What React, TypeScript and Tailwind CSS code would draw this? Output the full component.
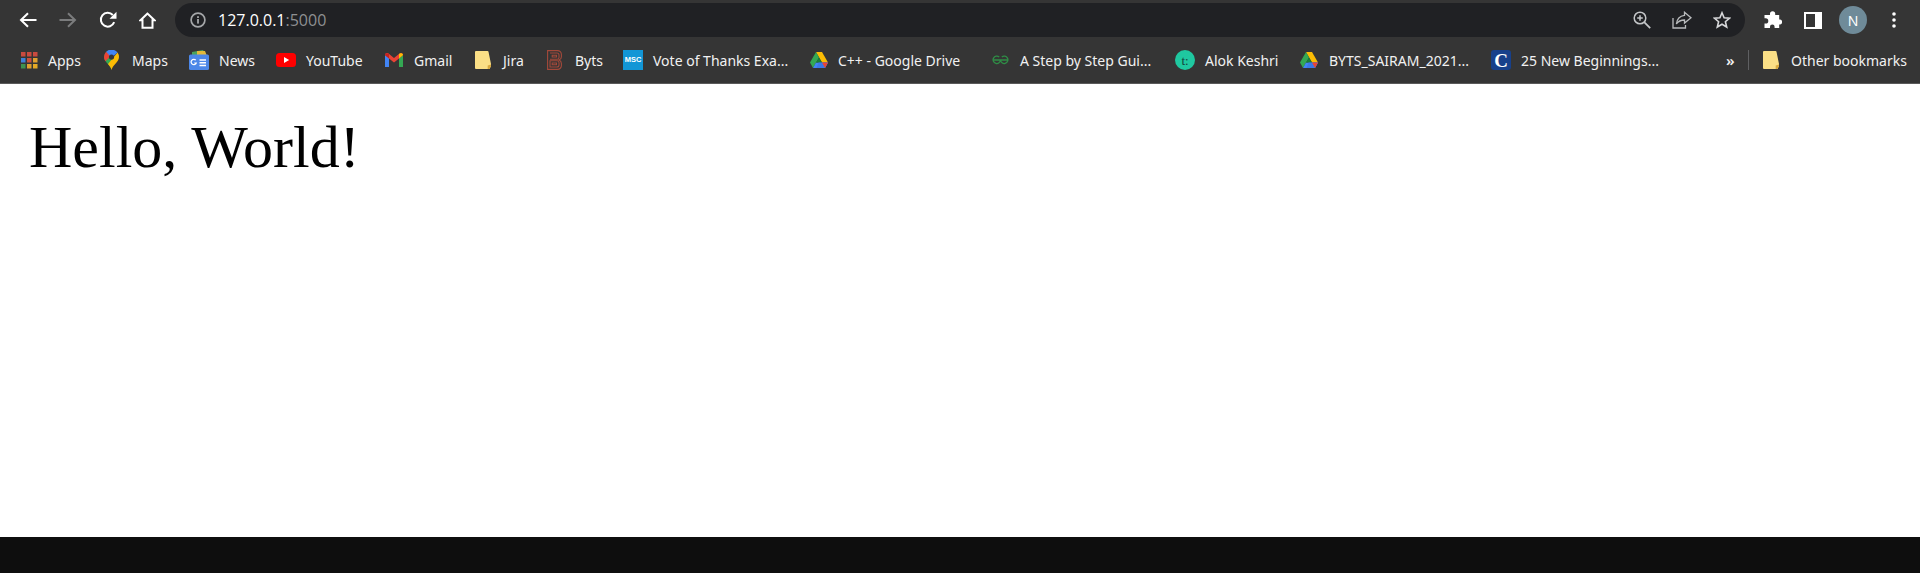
import React from "react";

const Sans = "font-['Noto_Sans','Open_Sans',sans-serif]";

function Back({ color }: { color: string }) {
  return (
    <svg width="18" height="16" viewBox="0 0 18 16" fill="none" stroke={color} strokeWidth="2">
      <path d="M17.500 8H2.500M9 1.200 2 8l7 6.800" />
    </svg>
  );
}
function Forward() {
  return (
    <svg width="18" height="16" viewBox="0 0 18 16" fill="none" stroke="#7b7c7d" strokeWidth="2">
      <path d="M.5 8h15M9 1.200 16 8l-7 6.800" />
    </svg>
  );
}
function Reload() {
  return (
    <svg width="18" height="18" viewBox="0 0 18 18" fill="none">
      <path d="M15.200 11.200A6.900 6.900 0 1 1 13.800 4" stroke="#fff" strokeWidth="2" />
      <path d="M17.500.8v7h-7z" fill="#fff" />
    </svg>
  );
}
function Home() {
  return (
    <svg width="17" height="17" viewBox="0 0 17 17" fill="none" stroke="#fff" strokeWidth="2">
      <path d="M8.500 1.600 1.500 8.200h2v7.600h10V8.200h2z" strokeLinejoin="miter" />
    </svg>
  );
}
function Info() {
  return (
    <svg width="16" height="16" viewBox="0 0 16 16" fill="none">
      <circle cx="8" cy="8" r="6.900" stroke="#a5a7a9" strokeWidth="1.700" />
      <rect x="7.100" y="7" width="1.800" height="4.600" fill="#a5a7a9" />
      <rect x="7.100" y="4.200" width="1.800" height="1.800" fill="#a5a7a9" />
    </svg>
  );
}
function ZoomIcon() {
  return (
    <svg width="18" height="18" viewBox="0 0 18 18" fill="none" stroke="#c4c6c8" strokeWidth="1.500">
      <circle cx="7" cy="7" r="5.800" />
      <path d="m11.200 11.200 6 6" strokeWidth="1.800" />
      <path d="M7 4.200v5.600M4.200 7h5.600" />
    </svg>
  );
}
function Share() {
  return (
    <svg width="20" height="18" viewBox="0 0 20 18" fill="none" stroke="#b9bbbd" strokeWidth="1.300">
      <path d="M1 7v10h12.500v-3" />
      <path d="M12.500 1.200 19 6.700l-6.500 5.400V9C9 9 6.400 10 4.400 13c.5-4.600 3.300-8 8.100-8.600z" />
    </svg>
  );
}
function Star() {
  return (
    <svg width="18" height="18" viewBox="0 0 18 18" fill="none" stroke="#d7d8da" strokeWidth="1.600">
      <path d="m9 1.800 2.100 5 5.400.4-4.100 3.500 1.300 5.300L9 13.200 4.300 16l1.300-5.300-4.100-3.500 5.400-.4z" />
    </svg>
  );
}
function Puzzle() {
  return (
    <svg width="19" height="18" viewBox="0 0 19 18" fill="#fff">
      <path d="M3 4h4V2.800a2.600 2.600 0 0 1 5.200 0V4h4v4.400h1a2.700 2.700 0 0 1 0 5.200h-1V17h-4.600v-1.300a2.300 2.300 0 0 0-4.600 0V17H1.500v-4.500h1.200a2.600 2.600 0 0 0 0-5.200H1.500V4z" />
    </svg>
  );
}
function Panel() {
  return (
    <svg width="18" height="17" viewBox="0 0 18 17">
      <path d="M0 0h18v17H0z" fill="#fff" />
      <path d="M2 2h9v13H2z" fill="#353535" />
    </svg>
  );
}
function Dots() {
  return (
    <svg width="6" height="16" viewBox="0 0 6 16" fill="#fff">
      <circle cx="3" cy="2" r="1.800" />
      <circle cx="3" cy="8" r="1.800" />
      <circle cx="3" cy="14" r="1.800" />
    </svg>
  );
}
function AppsIcon() {
  const colors = ["#c94a3f", "#c94a3f", "#c94a3f", "#3f80d8", "#c9503f", "#e0a030", "#3d9150", "#e0a030", "#e6a925"];
  return (
    <svg width="18" height="18" viewBox="0 0 18 18">
      {colors.map((c, i) => (
        <rect key={i} x={1 + (i % 3) * 6} y={1 + Math.floor(i / 3) * 6} width="4.500" height="4.500" fill={c} />
      ))}
    </svg>
  );
}
function MapsIcon() {
  return (
    <svg width="15" height="20" viewBox="0 0 15 20">
      <path d="M7.500 20C6.500 15 0 12 0 7a7.500 7.500 0 0 1 7.500-7z" fill="#34a853" />
      <path d="M7.500 20c1-5 7.500-8 7.500-13a7.500 7.500 0 0 0-1.500-4.500L4 14c1.500 2 3 3.500 3.500 6z" fill="#fbbc04" />
      <path d="M2.200 1.800A7.500 7.500 0 0 0 0 7c0 1.500.6 3 1.500 4.300L7.500 5z" fill="#ea4335" />
      <path d="M2.200 1.800A7.500 7.500 0 0 1 13.500 2.500L7.500 8z" fill="#4285f4" />
      <circle cx="7.500" cy="7" r="2.600" fill="#35363a" />
    </svg>
  );
}
function NewsIcon() {
  return (
    <svg width="20" height="20" viewBox="0 0 20 20">
      <path d="M3 2 14 0l3 5H3z" fill="#4aa35c" />
      <path d="M8 1h8l2 5H8z" fill="#e2b93b" />
      <rect x="0" y="4.500" width="20" height="15.500" rx="1.500" fill="#4c87e8" />
      <path d="M6.800 10.200a2.700 2.700 0 1 0 .5 2.800H5.300" fill="none" stroke="#fff" strokeWidth="1.200" />
      <path d="M10.500 9.200h6.500v1.500h-6.500zM10.500 12h6.500v1.500h-6.500zM10.500 14.800h6.500v1.500h-6.500z" fill="#fff" />
    </svg>
  );
}
function YouTubeIcon() {
  return (
    <svg width="20" height="14" viewBox="0 0 20 14">
      <rect width="20" height="14" rx="3.500" fill="#f00" />
      <path d="m8 4 5.200 3L8 10z" fill="#fff" />
    </svg>
  );
}
function GmailIcon() {
  return (
    <svg width="18" height="14" viewBox="0 0 18 14">
      <path d="M0 2v12h4V5z" fill="#4285f4" />
      <path d="M14 5v9h4V2z" fill="#34a853" />
      <path d="M0 2c0-2 2.500-2.500 3.500-1.500L9 5l5.500-4.500C15.500-.5 18 0 18 2l-4 3.500L9 9.500 4 5.500z" fill="#ea4335" />
      <path d="M14 .9c1.500-1.400 4-.8 4 1.100l-4 3.500z" fill="#fbbc04" />
      <path d="M0 2c0-1.900 2.500-2.500 4-1.100v4.600z" fill="#c5221f" />
    </svg>
  );
}
function NoteIcon() {
  return (
    <svg width="16" height="18" viewBox="0 0 16 18">
      <path d="M1 0h11.500a1 1 0 0 1 1 .8L16 13v2l-1.500 3H1a1 1 0 0 1-1-1V1a1 1 0 0 1 1-1z" fill="#fbdf86" />
      <path d="M16 13.500v1.500l-1.500 3h-1.800v-3.500z" fill="#d9a93f" />
    </svg>
  );
}
function BytsIcon() {
  return (
    <svg width="15" height="20" viewBox="0 0 15 20" fill="none" stroke="#a4493a" strokeWidth="1.100">
      <path d="M.6.6h10a3.800 3.800 0 0 1 3.800 3.800v2A3.600 3.600 0 0 1 12 10a3.800 3.800 0 0 1 2.400 3.500v2a3.800 3.800 0 0 1-3.800 3.900H.6z" />
      <path d="M3 3h7a2 2 0 0 1 2 2v2.500a1.800 1.800 0 0 1-1.800 1.700H3M3 10.800h7.200a1.800 1.800 0 0 1 1.800 1.700V15a2 2 0 0 1-2 2H3z" />
      <path d="M5.200 5.200h4.300v1.800H5.200zM5.200 13h4.300v1.800H5.200z" />
    </svg>
  );
}
function MscIcon() {
  return (
    <span className="flex h-5 w-5 items-center justify-center bg-[#1296d6] font-['Liberation_Sans',sans-serif] text-[7.5px] font-bold text-white">
      MSC
    </span>
  );
}
function DriveIcon() {
  return (
    <svg width="18" height="16" viewBox="0 0 18 16">
      <path d="M6 0h6l6 10.500h-6z" fill="#fbbc04" />
      <path d="M6 0 0 10.500 3 16l6-10.500z" fill="#34a853" />
      <path d="M6 10.500h12L15 16H3z" fill="#4285f4" />
      <path d="M9 5.500 6 10.500h6z" fill="#188038" />
      <path d="M15 16H6.500l2-5.500H18z" fill="#3b78e7" />
      <path d="M12 10.500h6L15 16z" fill="#ea4335" />
    </svg>
  );
}
function GeeksIcon() {
  return (
    <svg width="17" height="10" viewBox="0 0 17 10" fill="none" stroke="#2f8d46" strokeWidth="1.300">
      <path d="M8.500 5a3.700 3.700 0 1 1-1.300-3M8.500 5a3.700 3.700 0 1 0 1.300-3M.8 5h15.400" />
    </svg>
  );
}
function TIcon() {
  return (
    <span className="flex h-5 w-5 items-center justify-center rounded-full bg-[#1fc8a0] font-['Liberation_Serif',serif] text-[13px] leading-none text-[#14423a]">
      t:
    </span>
  );
}
function CIcon() {
  return (
    <span className="flex h-5 w-5 items-center justify-center rounded-[3px] bg-[#17408b] font-['Liberation_Serif',serif] text-[19px] font-bold leading-none text-white">
      C
    </span>
  );
}

const bookmarks: { label: string; icon: React.ReactNode; iconBox: string; width: string }[] = [
  { label: "Apps", icon: <AppsIcon />, iconBox: "w-[18px]", width: "w-[84px]" },
  { label: "Maps", icon: <MapsIcon />, iconBox: "w-[18px]", width: "w-[85px]" },
  { label: "News", icon: <NewsIcon />, iconBox: "w-5", width: "w-[87px]" },
  { label: "YouTube", icon: <YouTubeIcon />, iconBox: "w-5", width: "w-[109px]" },
  { label: "Gmail", icon: <GmailIcon />, iconBox: "w-[19px]", width: "w-[90px]" },
  { label: "Jira", icon: <NoteIcon />, iconBox: "w-[18px]", width: "w-[72px]" },
  { label: "Byts", icon: <BytsIcon />, iconBox: "w-[18px]", width: "w-[76px]" },
  { label: "Vote of Thanks Exa...", icon: <MscIcon />, iconBox: "w-5", width: "w-[187px]" },
  { label: "C++ - Google Drive", icon: <DriveIcon />, iconBox: "w-[18px]", width: "w-[182px]" },
  { label: "A Step by Step Gui...", icon: <GeeksIcon />, iconBox: "w-[18px]", width: "w-[183px]" },
  { label: "Alok Keshri", icon: <TIcon />, iconBox: "w-5", width: "w-[125px]" },
  { label: "BYTS_SAIRAM_2021...", icon: <DriveIcon />, iconBox: "w-[19px]", width: "w-[191px]" },
  { label: "25 New Beginnings...", icon: <CIcon />, iconBox: "w-5", width: "w-[235px]" },
];

export default function App() {
  return (
    <div className={`flex h-[573px] w-[1920px] flex-col overflow-hidden bg-white ${Sans}`}>
      <div className="flex h-10 items-center bg-[#353535] pl-[19px]">
        <div className="flex w-[156px] items-center">
          <div className="w-10"><Back color="#ffffff" /></div>
          <div className="w-10"><Forward /></div>
          <div className="w-10"><Reload /></div>
          <Home />
        </div>
        <div className="flex h-[34px] w-[1570px] items-center rounded-full bg-[#202124] pl-[15px] pr-[14px]">
          <Info />
          <span className="ml-3 font-['Open_Sans',sans-serif] text-base leading-none text-white">
            127.0.0.1<span className="text-[#8e9092]">:5000</span>
          </span>
          <div className="ml-auto flex items-center gap-[21px]">
            <ZoomIcon />
            <Share />
            <Star />
          </div>
        </div>
        <div className="ml-[18px] flex items-center">
          <Puzzle />
          <div className="ml-[22px]"><Panel /></div>
          <div className="ml-[17px] flex h-7 w-7 items-center justify-center rounded-full bg-[#6f8b99] text-[14px] text-white">N</div>
          <div className="ml-[24px]"><Dots /></div>
        </div>
      </div>

      <div className="flex h-[44px] items-center border-b border-[#5a5a5a] bg-[#353535] pb-[3px] pl-5 text-[14px] text-[#f1f1f1]">
        {bookmarks.map((b) => (
          <div key={b.label} className={`flex shrink-0 items-center gap-[10px] ${b.width}`}>
            <span className={`flex justify-start ${b.iconBox}`}>{b.icon}</span>
            <span className="whitespace-nowrap">{b.label}</span>
          </div>
        ))}
        <span className="w-[9px] text-[15px] font-semibold leading-none">»</span>
        <span className="ml-[13px] h-[20px] w-px bg-[#5f6062]" />
        <span className="ml-[14px] flex w-4"><NoteIcon /></span>
        <span className="ml-[12px] whitespace-nowrap">Other bookmarks</span>
      </div>

      <main className="flex-1 bg-white pl-[29px] pt-[31px]">
        <h1 className="font-['Liberation_Serif',serif] text-[60px] font-normal leading-[64px] text-black">Hello, World!</h1>
      </main>

      <div className="h-9 bg-[#0e0e0e]" />
    </div>
  );
}
